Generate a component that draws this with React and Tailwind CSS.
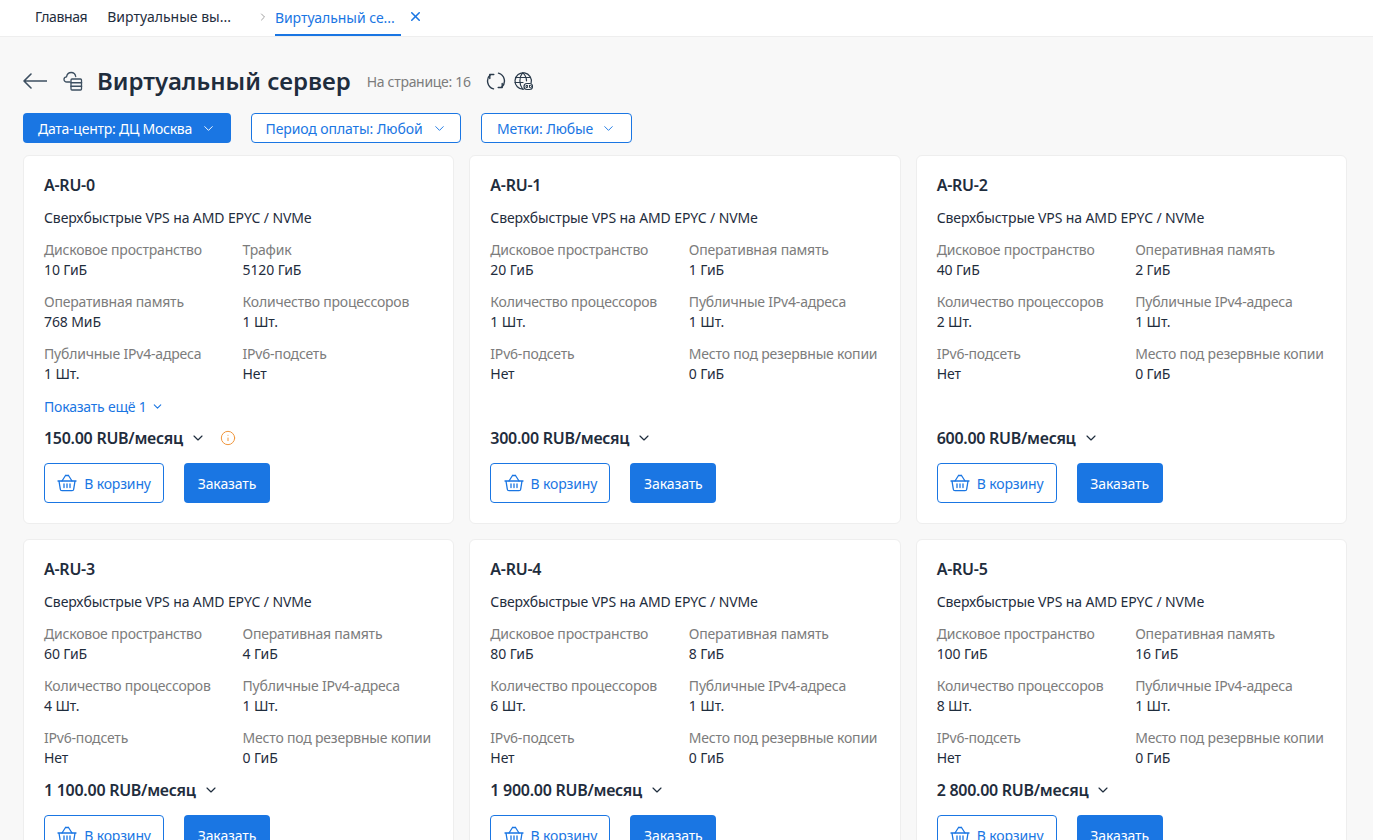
import { ChevronDown, ChevronRight, X, Info } from 'lucide-react'

const plans = [
  {
    name: 'A-RU-0',
    specs: [
      ['Дисковое пространство', '10 ГиБ'],
      ['Трафик', '5120 ГиБ'],
      ['Оперативная память', '768 МиБ'],
      ['Количество процессоров', '1 Шт.'],
      ['Публичные IPv4-адреса', '1 Шт.'],
      ['IPv6-подсеть', 'Нет'],
    ],
    more: true,
    price: '150.00 RUB/месяц',
    info: true,
  },
  { name: 'A-RU-1', disk: '20 ГиБ', ram: '1 ГиБ', cpu: '1 Шт.', price: '300.00 RUB/месяц' },
  { name: 'A-RU-2', disk: '40 ГиБ', ram: '2 ГиБ', cpu: '2 Шт.', price: '600.00 RUB/месяц' },
  { name: 'A-RU-3', disk: '60 ГиБ', ram: '4 ГиБ', cpu: '4 Шт.', price: '1 100.00 RUB/месяц' },
  { name: 'A-RU-4', disk: '80 ГиБ', ram: '8 ГиБ', cpu: '6 Шт.', price: '1 900.00 RUB/месяц' },
  { name: 'A-RU-5', disk: '100 ГиБ', ram: '16 ГиБ', cpu: '8 Шт.', price: '2 800.00 RUB/месяц' },
]

const getSpecs = (p) =>
  p.specs || [
    ['Дисковое пространство', p.disk],
    ['Оперативная память', p.ram],
    ['Количество процессоров', p.cpu],
    ['Публичные IPv4-адреса', '1 Шт.'],
    ['IPv6-подсеть', 'Нет'],
    ['Место под резервные копии', '0 ГиБ'],
  ]

const BackArrow = () => (
  <svg width="24" height="18" viewBox="0 0 24 18" fill="none" stroke="#3d4f60" strokeWidth="1.6" strokeLinecap="round" strokeLinejoin="round">
    <path d="M1 9H23.500M8 2 1 9 8 16" />
  </svg>
)

const CloudServer = () => (
  <svg width="20" height="20" viewBox="0 0 20 20" fill="none" stroke="#3d4f60" strokeWidth="1.3" strokeLinecap="round" strokeLinejoin="round">
    <path d="M7 11H3.800C2.200 11 1 9.800 1 8.400 1 7 2.100 6 3.500 5.900 3.900 3.600 5.800 1.500 8.200 1.500c2.300 0 4.100 1.700 4.500 4" />
    <rect x="8" y="8" width="10.500" height="11" rx="1" />
    <path d="M8 11.700h10.500M8 15.300h10.500" strokeWidth="1.600" />
  </svg>
)

const Refresh = () => (
  <svg width="20" height="20" viewBox="0 0 20 20" fill="none" stroke="#2b3b4b" strokeWidth="1.4" strokeLinecap="round" strokeLinejoin="round">
    <path d="M4.300 3.800A8.300 8.300 0 0 0 7.500 17.900" />
    <path d="M12.500 2.100A8.300 8.300 0 0 1 15.700 16.200" />
    <path d="M3.800 7.500V3.500H7.800M16.200 12.500V16.500H12.200" />
  </svg>
)

const GlobeGb = () => (
  <svg width="20" height="20" viewBox="0 0 20 20" fill="none" stroke="#2b3b4b" strokeWidth="1.2" strokeLinecap="round" strokeLinejoin="round">
    <path d="M10.500 18.200a8.200 8.200 0 1 1 7.600-6" />
    <path d="M2.500 6.500h15M2 11.500h8M9.500 1.800C6 6 6 13.500 9.500 18M10 1.800c2.500 2.500 3.500 5.500 3.500 8" />
    <rect x="11" y="12.500" width="8.500" height="6" rx="3" fill="#f8f8f8" />
    <path d="M14.500 14.500h-1.500v2h1.500v-1M16.500 14.500v2h1a.5 .5 0 0 0 0-2h-1" strokeWidth="1" />
  </svg>
)

const Basket = () => (
  <svg width="20" height="18" viewBox="0 0 20 18" fill="none" stroke="#1a76e3" strokeWidth="1.3" strokeLinecap="round" strokeLinejoin="round">
    <path d="M1 7h18M2 7l1.300 8.200c.1.900.8 1.500 1.700 1.500h10c.9 0 1.600-.6 1.700-1.500L18 7" />
    <path d="M5 7 8.500 1.500M15 7 11.500 1.500M8.500 1.500h3M7 10v3.500M10 10v3.500M13 10v3.500" />
  </svg>
)

const PlanCard = ({ plan }) => (
  <div className="bg-white border border-[#eeeeee] rounded-md px-5 pt-[19px] pb-5 flex flex-col">
    <div className="text-[16px] leading-5 font-semibold text-[#1f2d3d] tracking-[-0.25px]">{plan.name}</div>
    <div className="mt-[13px] text-[14px] leading-5 text-[#1f2d3d] tracking-[-0.11px]">Сверхбыстрые VPS на AMD EPYC / NVMe</div>
    <div className="mt-3 grid grid-cols-[198.5px_1fr] gap-y-3">
      {getSpecs(plan).map(([label, value]) => (
        <div key={label} className="text-[14px] leading-5">
          <div className="text-[#7c7c7c] whitespace-nowrap tracking-[-0.2px]">{label}</div>
          <div className="text-[#1f2d3d] tracking-[-0.1px]">{value}</div>
        </div>
      ))}
    </div>
    {plan.more && (
      <div className="h-5 mt-3 flex items-center gap-1 text-[14px] text-[#1a76e3] tracking-[-0.2px]">
        Показать ещё 1 <ChevronDown size={13} strokeWidth={2} />
      </div>
    )}
    <div className="mt-auto pt-3 flex items-center text-[16px] leading-5 font-semibold text-[#1f2d3d] tracking-[-0.28px] whitespace-nowrap">
      {plan.price}
      <ChevronDown size={16} className="ml-[7px]" strokeWidth={1.75} />
      {plan.info && <Info size={16} strokeWidth={1.5} className="ml-[14px] text-[#f0963c]" />}
    </div>
    <div className="mt-[15px] flex gap-5">
      <button className="w-[120px] h-10 border border-[#1a76e3] rounded text-[#1a76e3] text-[14px] tracking-[-0.15px] flex items-center justify-center gap-[7px]">
        <Basket />В корзину
      </button>
      <button className="w-[86px] h-10 bg-[#1a76e3] rounded text-white text-[14px] tracking-[-0.1px]">Заказать</button>
    </div>
  </div>
)

const App = () => {
  return (
    <div className="h-[840px] overflow-hidden bg-[#f8f8f8] font-['Noto_Sans',sans-serif]">
      <div className="h-[37px] bg-white border-b border-[#eeeeee] flex items-start pl-[35px] text-[14px] text-[#1f2d3d]">
        <span className="leading-[34px] tracking-[-0.4px]">Главная</span>
        <span className="leading-[34px] ml-5">Виртуальные вы...</span>
        <ChevronRight size={12} className="ml-[26px] mt-[11px] text-[#a0a0a0]" />
        <div className="ml-[6px] flex items-center h-[36px] border-b-2 border-[#1a76e3] text-[#1a76e3] w-[126px] tracking-[-0.05px]">
          Виртуальный се...
        </div>
        <X size={15} strokeWidth={2.5} className="ml-[7px] mt-[9px] text-[#1a76e3]" />
      </div>
      <div className="pl-[23px] pr-[26px]">
        <div className="mt-[26px] h-9 flex items-center">
          <BackArrow />
          <div className="ml-[16px]">
            <CloudServer />
          </div>
          <h1 className="ml-[14px] text-[24px] font-semibold text-[#1f2d3d]">Виртуальный сервер</h1>
          <span className="ml-4 text-[14px] text-[#7c7c7c] tracking-[-0.3px]">На странице: 16</span>
          <div className="ml-[15px]">
            <Refresh />
          </div>
          <div className="ml-[7px]">
            <GlobeGb />
          </div>
        </div>
        <div className="mt-[14px] flex gap-5 text-[14px]">
          <button className="h-[30px] w-[208px] rounded bg-[#1a76e3] text-white flex items-center justify-center gap-[9px] tracking-[-0.24px]">
            Дата-центр: ДЦ Москва <ChevronDown size={15} strokeWidth={1.5} />
          </button>
          <button className="h-[30px] w-[210px] rounded bg-white border border-[#1a76e3] text-[#1a76e3] flex items-center justify-center gap-[9px] tracking-[-0.1px]">
            Период оплаты: Любой <ChevronDown size={15} strokeWidth={1.5} />
          </button>
          <button className="h-[30px] w-[151px] rounded bg-white border border-[#1a76e3] text-[#1a76e3] flex items-center justify-center gap-2 tracking-[-0.15px]">
            Метки: Любые <ChevronDown size={15} strokeWidth={1.5} />
          </button>
        </div>
        <div className="mt-[12px] grid grid-cols-3 gap-x-[15px] gap-y-[15px]">
          {plans.map((p) => (
            <PlanCard key={p.name} plan={p} />
          ))}
        </div>
      </div>
    </div>
  )
}

export default App
